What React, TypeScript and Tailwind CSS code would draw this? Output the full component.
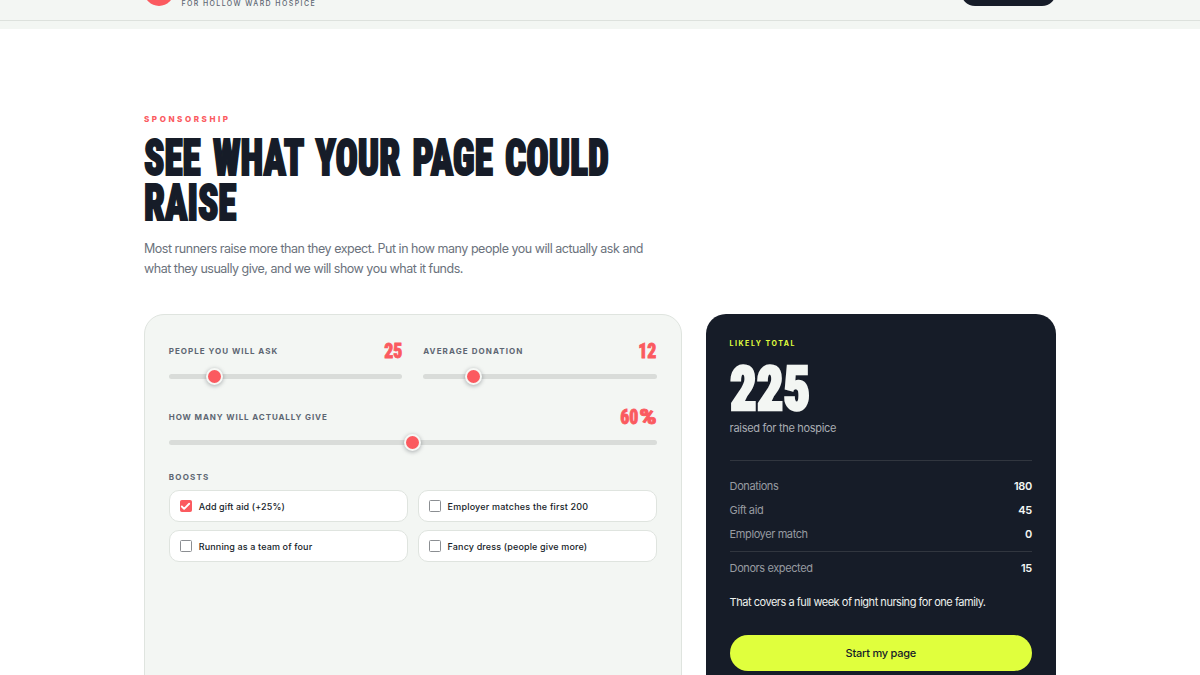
import type { ReactNode } from "react";
import clsx from "clsx";
import { Check } from "lucide-react";
import { useState } from "react";

// Sponsorship calculator: sliders and boosts on the left, the likely total on the right.

// Poster-style condensed face; the stroke thickens the stems, callers squeeze it with scale-x.
const DISPLAY = "font-['Roboto_Condensed'] font-black";

const TIERS = [
  { from: 600, copy: "That covers a full month of night nursing for one family." },
  { from: 200, copy: "That covers a full week of night nursing for one family." },
  { from: 0, copy: "That covers a night of nursing for one family." },
];

type BoostKey = "giftAid" | "match" | "team" | "fancy";

const BOOSTS: { key: BoostKey; label: string; tracking: string }[] = [
  { key: "giftAid", label: "Add gift aid (+25%)", tracking: "tracking-[0.11px]" },
  { key: "match", label: "Employer matches the first 200", tracking: "tracking-[0.2px]" },
  { key: "team", label: "Running as a team of four", tracking: "tracking-[0.13px]" },
  { key: "fancy", label: "Fancy dress (people give more)", tracking: "tracking-[0.14px]" },
];

function Label({ children, className }: { children: ReactNode; className?: string }) {
  return (
    <span className={clsx("text-[8px] leading-[12px] font-bold uppercase text-[#5d6672]", className)}>
      {children}
    </span>
  );
}

type SliderProps = {
  label: string;
  tracking: string;
  value: number;
  suffix?: string;
  min: number;
  max: number;
  step?: number;
  onChange: (value: number) => void;
};

function Slider({ label, tracking, value, suffix, min, max, step = 1, onChange }: SliderProps) {
  return (
    <label className="flex flex-col">
      <span className="flex h-6 items-center justify-between">
        <Label className={tracking}>{label}</Label>
        <span
          className={clsx(DISPLAY, "flex text-[20px] leading-6 text-[#fb5a5f] [-webkit-text-stroke:0.8px_#fb5a5f]")}
        >
          <span className="origin-right scale-x-[0.89]">{value}</span>
          {suffix && <span className="ml-[5px] origin-right scale-x-[1.36]">{suffix}</span>}
        </span>
      </span>
      <input
        type="range"
        min={min}
        max={max}
        step={step}
        value={value}
        onChange={(e) => onChange(Number(e.target.value))}
        className="mt-[11px] h-[5px] w-full appearance-none rounded-full bg-[#d9dcd9] outline-none [&::-webkit-slider-thumb]:size-[17px] [&::-webkit-slider-thumb]:appearance-none [&::-webkit-slider-thumb]:rounded-full [&::-webkit-slider-thumb]:border-2 [&::-webkit-slider-thumb]:border-[#f6f8f5] [&::-webkit-slider-thumb]:bg-[#fb5a5f] [&::-webkit-slider-thumb]:shadow-[0_1px_4px_rgba(22,28,40,0.35)]"
      />
    </label>
  );
}

function Row({ label, value, className }: { label: string; value: number; className?: string }) {
  return (
    <div className={clsx("flex h-6 items-center justify-between text-[11px]", className)}>
      <span className="tracking-[-0.4px] text-[#979ba1]">{label}</span>
      <span className="font-semibold tracking-[-0.3px] text-[#f3f6f3]">{value}</span>
    </div>
  );
}

export default function App() {
  const [people, setPeople] = useState(25);
  const [average, setAverage] = useState(12);
  const [rate, setRate] = useState(60);
  const [boosts, setBoosts] = useState<Record<BoostKey, boolean>>({
    giftAid: true,
    match: false,
    team: false,
    fancy: false,
  });

  const donors = Math.round((people * rate * (boosts.team ? 4 : 1)) / 100);
  const donations = Math.round(donors * average * (boosts.fancy ? 1.1 : 1));
  const giftAid = boosts.giftAid ? Math.round(donations * 0.25) : 0;
  const match = boosts.match ? Math.min(donations, 200) : 0;
  const total = donations + giftAid + match;
  const tier = TIERS.find((t) => total >= t.from) ?? TIERS[2];

  return (
    <div className="flex h-[675px] flex-col overflow-hidden bg-white font-['Inter',sans-serif] text-[#161c28]">
      <header className="h-[21px] shrink-0 overflow-hidden border-b border-[#dde1dd] bg-[#f3f6f3]">
        <div className="mx-auto -mt-6 flex h-[30.4px] w-[912px] items-end justify-between">
          <div className="flex items-end gap-[7px]">
            <span className="size-[30.4px] rounded-full bg-[#fb5a5f]" />
            <span className="text-[7px] leading-[4px] font-medium tracking-[1.41px] text-[#5d6672]">
              FOR HOLLOW WARD HOSPICE
            </span>
          </div>
          <span className="h-7 w-[95px] rounded-full bg-[#161c28]" />
        </div>
      </header>
      <div className="h-[8px] shrink-0 bg-[#f3f6f3]" />

      <section className="mx-auto flex w-[912px] flex-col pt-[84px]">
        <p className="text-[8px] leading-[12px] font-extrabold tracking-[2.57px] text-[#fb5a5f]">SPONSORSHIP</p>
        <h2
          className={clsx(
            DISPLAY,
            "mt-[9.5px] text-[50.5px] leading-[45px] whitespace-nowrap [word-spacing:5px] [-webkit-text-stroke:2px_#161c28]",
          )}
        >
          <span className="block origin-left scale-x-[0.735]">SEE WHAT YOUR PAGE COULD</span>
          <span className="block origin-left scale-x-[0.735]">RAISE</span>
        </h2>
        <p className="mt-[14.5px] text-[12.5px] leading-5 whitespace-nowrap text-[#6b727c]">
          <span className="block tracking-[-0.475px]">
            Most runners raise more than they expect. Put in how many people you will actually ask and
          </span>
          <span className="block tracking-[-0.49px]">
            what they usually give, and we will show you what it funds.
          </span>
        </p>

        <div className="mt-[35px] grid grid-cols-[537.6px_350.4px] gap-6">
          <div className="h-[400px] rounded-[20px] border border-[#dfe4df] bg-[#f3f6f3] px-[23.8px] pt-6">
            <div className="grid grid-cols-2 gap-[20.8px]">
              <Slider
                label="People you will ask"
                tracking="tracking-[1px]"
                value={people}
                min={5}
                max={120}
                onChange={setPeople}
              />
              <Slider
                label="Average donation"
                tracking="tracking-[1.08px]"
                value={average}
                min={3}
                max={50}
                onChange={setAverage}
              />
            </div>
            <div className="mt-[26px]">
              <Slider
                label="How many will actually give"
                tracking="tracking-[0.9px]"
                value={rate}
                suffix="%"
                min={20}
                max={100}
                step={5}
                onChange={setRate}
              />
            </div>
            <div className="mt-[26px] flex">
              <Label className="tracking-[1.2px]">Boosts</Label>
            </div>
            <div className="mt-[7px] grid grid-cols-2 gap-x-[9.6px] gap-y-2">
              {BOOSTS.map(({ key, label, tracking }) => (
                <label
                  key={key}
                  className="flex h-8 items-center gap-[7px] rounded-[10px] border border-[#dfe4df] bg-white px-[10px]"
                >
                  <span className="grid size-3 place-items-center">
                    <input
                      type="checkbox"
                      checked={boosts[key]}
                      onChange={() => setBoosts((b) => ({ ...b, [key]: !b[key] }))}
                      className="col-start-1 row-start-1 size-3 appearance-none rounded-[1.5px] border border-[#8b8e92] bg-white checked:border-[#fb5a5f] checked:bg-[#fb5a5f]"
                    />
                    {boosts[key] && (
                      <Check className="pointer-events-none z-10 col-start-1 row-start-1 size-[11px] text-white" strokeWidth={4} />
                    )}
                  </span>
                  <span className={clsx("pt-[2px] text-[9px] font-medium", tracking)}>{label}</span>
                </label>
              ))}
            </div>
          </div>

          <aside className="flex h-[400px] flex-col rounded-[20px] bg-[#161c28] px-6 pt-6">
            <p className="text-[7px] leading-[11px] font-bold tracking-[1.52px] text-[#e0ff3d]">LIKELY TOTAL</p>
            <p
              className={clsx(
                DISPLAY,
                "mt-[15px] origin-left scale-x-[0.845] text-[62px] leading-[50px] text-[#f3f6f3] [-webkit-text-stroke:2.6px_#f3f6f3]",
              )}
            >
              {total}
            </p>
            <p className="mt-[6px] text-[11px] leading-4 tracking-[-0.3px] text-[#a9adb3]">raised for the hospice</p>
            <div className="mt-6 border-t border-[#31363f] pt-[13px]">
              <Row label="Donations" value={donations} />
              <Row label="Gift aid" value={giftAid} />
              <Row label="Employer match" value={match} />
              <Row label="Donors expected" value={donors} className="mt-[5px] h-[34px] border-t border-[#31363f]" />
            </div>
            <p className="mt-[9px] text-[11px] leading-4 tracking-[-0.475px] whitespace-nowrap text-[#eef1ee]">
              {tier.copy}
            </p>
            <button
              type="button"
              className="mt-[25px] h-9 rounded-full bg-[#e0ff3d] text-[11px] font-medium tracking-[-0.24px]"
            >
              Start my page
            </button>
          </aside>
        </div>
      </section>
    </div>
  );
}
